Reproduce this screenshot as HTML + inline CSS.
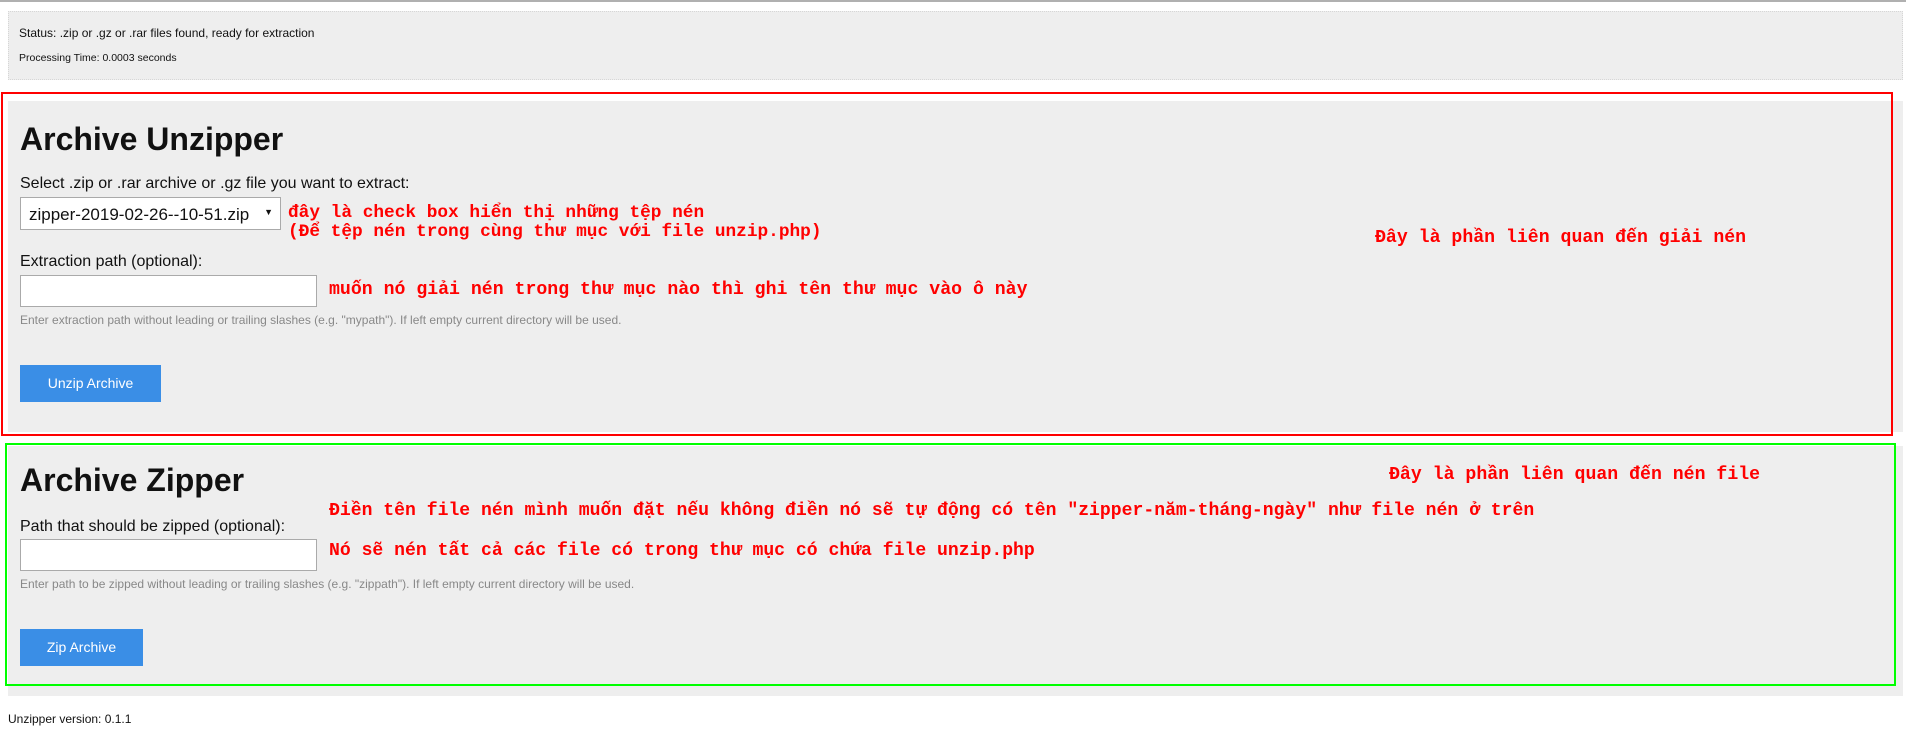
<!DOCTYPE html>
<html><head><meta charset="utf-8"><style>
body{margin:0;width:1906px;height:730px;background:#fff;position:relative;overflow:hidden;font-family:"Liberation Sans",Arial,sans-serif;color:#111}
.a{position:absolute;white-space:nowrap}
.gray{position:absolute;background:#eeeeee}
.note{position:absolute;white-space:nowrap;color:#f00;font-family:"Liberation Mono","DejaVu Sans Mono",monospace;font-weight:bold;font-size:18.2px;line-height:20px}
.inp{position:absolute;background:#fff;border:1px solid #aaa;box-sizing:border-box}
.btn{position:absolute;background:#3a8ee6;color:#fff;font-size:14px;text-align:center}
.help{position:absolute;white-space:nowrap;color:#888;font-size:12px}
h1{margin:0;position:absolute;font-size:32px;font-weight:bold;white-space:nowrap}
.lbl{position:absolute;white-space:nowrap;font-size:16px}
</style></head><body>
<div class="a" style="left:0;top:0;width:1906px;height:2px;background:#b0b0b0"></div>
<div class="gray" style="left:8px;top:11px;width:1895px;height:69px;border:1px dotted #d6d6d6;box-sizing:border-box"></div>
<div class="a" style="left:19px;top:26px;font-size:12px">Status: .zip or .gz or .rar files found, ready for extraction</div>
<div class="a" style="left:19px;top:52px;font-size:10.5px">Processing Time: 0.0003 seconds</div>

<div class="gray" style="left:8px;top:101px;width:1895px;height:331px"></div>
<div class="a" style="left:1px;top:92px;width:1892px;height:344px;border:2px solid #f00;box-sizing:border-box"></div>
<h1 style="left:20px;top:121px">Archive Unzipper</h1>
<div class="lbl" style="left:20px;top:175px">Select .zip or .rar archive or .gz file you want to extract:</div>
<div class="inp" style="left:20px;top:197px;width:261px;height:33px;font-size:17px;padding:7px 0 0 8px">zipper-2019-02-26--10-51.zip<span style="position:absolute;right:7px;top:9px;font-size:9px">▼</span></div>
<div class="note" style="left:288px;top:204px;line-height:19px;font-size:17.8px">đây là check box hiển thị những tệp nén<br>(Để tệp nén trong cùng thư mục với file unzip.php)</div>
<div class="note" style="left:1375px;top:228px">Đây là phần liên quan đến giải nén</div>
<div class="lbl" style="left:20px;top:253px">Extraction path (optional):</div>
<div class="inp" style="left:20px;top:275px;width:297px;height:32px"></div>
<div class="note" style="left:329px;top:280px">muốn nó giải nén trong thư mục nào thì ghi tên thư mục vào ô này</div>
<div class="help" style="left:20px;top:313px">Enter extraction path without leading or trailing slashes (e.g. "mypath"). If left empty current directory will be used.</div>
<div class="btn" style="left:20px;top:365px;width:141px;height:37px;line-height:37px">Unzip Archive</div>

<div class="gray" style="left:8px;top:446px;width:1895px;height:250px"></div>
<div class="a" style="left:5px;top:443px;width:1891px;height:243px;border:2px solid #0f0;box-sizing:border-box"></div>
<h1 style="left:20px;top:462px">Archive Zipper</h1>
<div class="note" style="left:1389px;top:465px">Đây là phần liên quan đến nén file</div>
<div class="note" style="left:329px;top:501px;font-size:18.1px">Điền tên file nén mình muốn đặt nếu không điền nó sẽ tự động có tên "zipper-năm-tháng-ngày" như file nén ở trên</div>
<div class="lbl" style="left:20px;top:518px">Path that should be zipped (optional):</div>
<div class="inp" style="left:20px;top:539px;width:297px;height:32px"></div>
<div class="note" style="left:329px;top:541px;font-size:18.1px">Nó sẽ nén tất cả các file có trong thư mục có chứa file unzip.php</div>
<div class="help" style="left:20px;top:577px">Enter path to be zipped without leading or trailing slashes (e.g. "zippath"). If left empty current directory will be used.</div>
<div class="btn" style="left:20px;top:629px;width:123px;height:37px;line-height:37px">Zip Archive</div>

<div class="a" style="left:8px;top:712px;font-size:12px">Unzipper version: 0.1.1</div>
</body></html>
